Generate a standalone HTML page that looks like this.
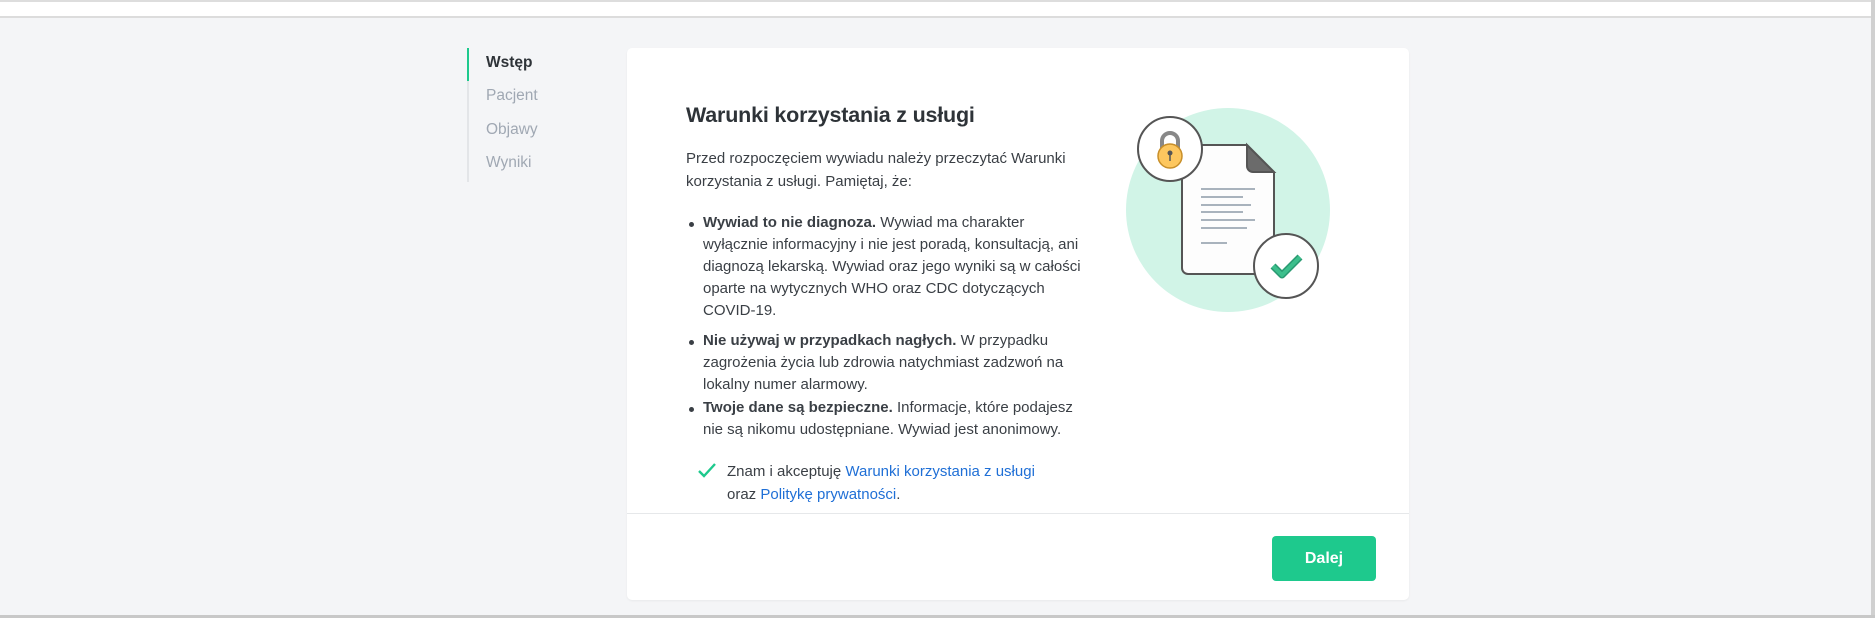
<!DOCTYPE html>
<html><head><meta charset="utf-8"><style>
*{margin:0;padding:0;box-sizing:border-box}
html,body{width:1875px;height:618px;overflow:hidden}
body{background:#f4f5f7;font-family:"Liberation Sans",Arial,sans-serif;color:#2e3338;position:relative}
.top{position:absolute;left:0;top:0;width:1875px;height:18px;background:#fff;border-top:2px solid #ddd;border-bottom:2px solid #dcdcdc}
.rb{position:absolute;right:0;top:0;width:4px;height:618px;background:#d0d0d0}
.bb{position:absolute;left:0;bottom:0;width:1875px;height:3px;background:#c8c8c8}
.side{position:absolute;left:467px;top:48px;height:134px;border-left:2px solid #e3e5e8}
.side .act{position:absolute;left:-2px;top:0;width:2px;height:33px;background:#1ec98d}
.side div.i{position:absolute;left:17px;font-size:15.5px;color:#a0a8b3;white-space:nowrap}
.card{position:absolute;left:627px;top:48px;width:782px;height:552px;background:#fff;border-radius:5px;box-shadow:0 1px 2px rgba(0,0,0,.05)}
.foot{position:absolute;left:0;top:465px;width:782px;border-top:1px solid #e6e8ea}
.btn{position:absolute;left:645px;top:488px;width:104px;height:45px;background:#1ec98d;border-radius:4px;color:#fff;font-weight:bold;font-size:16px;text-align:center;line-height:45px}
h1{position:absolute;left:59px;top:55px;font-size:21.5px;font-weight:bold;color:#2e3338;letter-spacing:-0.2px}
.t{position:absolute;left:59px;font-size:15px;line-height:23px;color:#3a3f45;white-space:nowrap}
.b{position:absolute;left:76px;font-size:15px;line-height:22px;color:#3a3f45;white-space:nowrap}
.dot{position:absolute;left:62px;width:5px;height:5px;border-radius:50%;background:#3a3f45}
a{color:#1f6fd6;text-decoration:none}
</style></head><body>
<div class="top"></div>
<div class="side"><div class="act"></div>
<div class="i" style="top:6px;color:#2e3338;font-weight:bold">Wstęp</div>
<div class="i" style="top:39px">Pacjent</div>
<div class="i" style="top:73px">Objawy</div>
<div class="i" style="top:106px">Wyniki</div>
</div>
<div class="card">
<h1>Warunki korzystania z usługi</h1>
<div class="t" style="top:99px">Przed rozpoczęciem wywiadu należy przeczytać Warunki<br>korzystania z usługi. Pamiętaj, że:</div>
<div class="dot" style="top:174px"></div>
<div class="b" style="top:164px"><b>Wywiad to nie diagnoza.</b> Wywiad ma charakter<br>wyłącznie informacyjny i nie jest poradą, konsultacją, ani<br>diagnozą lekarską. Wywiad oraz jego wyniki są w całości<br>oparte na wytycznych WHO oraz CDC dotyczących<br>COVID-19.</div>
<div class="dot" style="top:292px"></div>
<div class="b" style="top:282px"><b>Nie używaj w przypadkach nagłych.</b> W przypadku<br>zagrożenia życia lub zdrowia natychmiast zadzwoń na<br>lokalny numer alarmowy.</div>
<div class="dot" style="top:359px"></div>
<div class="b" style="top:349px"><b>Twoje dane są bezpieczne.</b> Informacje, które podajesz<br>nie są nikomu udostępniane. Wywiad jest anonimowy.</div>
<svg style="position:absolute;left:70px;top:414px" width="20" height="18" viewBox="0 0 20 18"><path d="M2 9 L7 14 L18 2" fill="none" stroke="#1ec98d" stroke-width="2.4"/></svg>
<div class="b" style="top:412px;left:100px;line-height:23px">Znam i akceptuję <a>Warunki korzystania z usługi</a><br>oraz <a>Politykę prywatności</a>.</div>
<svg style="position:absolute;left:490px;top:48px" width="230" height="230" viewBox="1117 96 230 230">
<circle cx="1228" cy="210" r="102" fill="#d1f4e7"/>
<path d="M1190 145 H1247 L1274 172 V268 a6 6 0 0 1-6 6 H1188 a6 6 0 0 1-6-6 V151 a6 6 0 0 1 6-6z" fill="#fdfdfd" stroke="#555" stroke-width="2"/>
<path d="M1247 145 L1274 172 H1253 a6 6 0 0 1-6-6z" fill="#6b6b6b" stroke="#555" stroke-width="2"/>
<g stroke="#a9b3bd" stroke-width="2"><line x1="1201" y1="189" x2="1255" y2="189"/><line x1="1201" y1="197" x2="1243" y2="197"/><line x1="1201" y1="205" x2="1251" y2="205"/><line x1="1201" y1="212" x2="1243" y2="212"/><line x1="1201" y1="220" x2="1255" y2="220"/><line x1="1201" y1="228" x2="1247" y2="228"/><line x1="1201" y1="243" x2="1227" y2="243"/></g>
<circle cx="1170" cy="149" r="32" fill="#fff" stroke="#555" stroke-width="2"/>
<path d="M1162 150 V141 a8 8 0 0 1 16 0 V150" fill="none" stroke="#888" stroke-width="4"/>
<circle cx="1170" cy="156" r="12" fill="#fdc75f" stroke="#c88f2a" stroke-width="1.5"/>
<circle cx="1170" cy="153" r="2.5" fill="#555"/><line x1="1170" y1="153" x2="1170" y2="161" stroke="#555" stroke-width="1.5"/>
<circle cx="1286" cy="266" r="32" fill="#fff" stroke="#555" stroke-width="2"/>
<path d="M1273 266 L1282 275 L1300 257" fill="none" stroke="#2a9b72" stroke-width="7" stroke-linejoin="round"/>
<path d="M1273 266 L1282 275 L1300 257" fill="none" stroke="#3cbf8c" stroke-width="4" stroke-linejoin="round"/>
</svg>
<div class="foot"></div>
<div class="btn">Dalej</div>
</div>
<div class="rb"></div><div class="bb"></div>
</body></html>
